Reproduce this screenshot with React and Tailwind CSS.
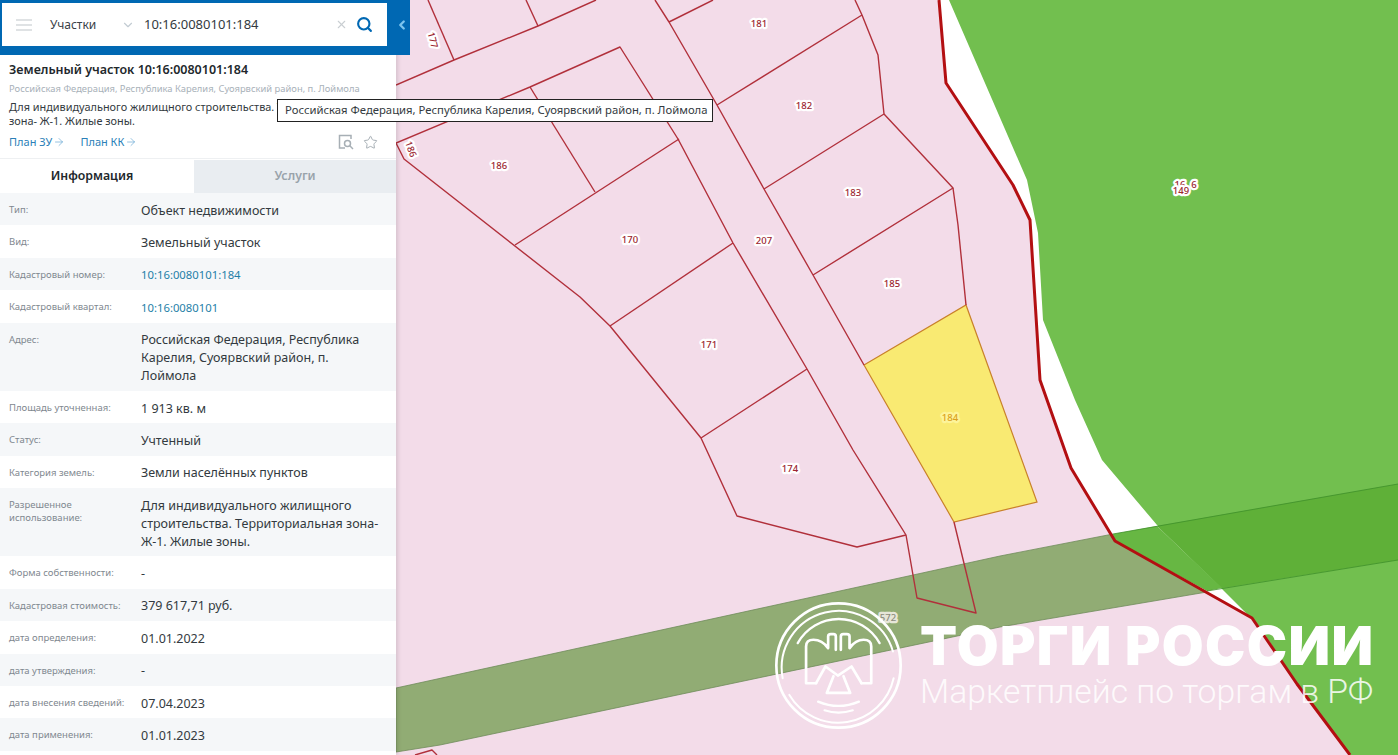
import { ArrowRight, ChevronDown, ChevronLeft, Search, Star, X } from 'lucide-react';

const rows = [
  ['Тип:', 'Объект недвижимости'],
  ['Вид:', 'Земельный участок'],
  ['Кадастровый номер:', '10:16:0080101:184', true],
  ['Кадастровый квартал:', '10:16:0080101', true],
  ['Адрес:', 'Российская Федерация, Республика Карелия, Суоярвский район, п. Лоймола'],
  ['Площадь уточненная:', '1 913 кв. м'],
  ['Статус:', 'Учтенный'],
  ['Категория земель:', 'Земли населённых пунктов'],
  ['Разрешенное использование:', 'Для индивидуального жилищного строительства. Территориальная зона- Ж-1. Жилые зоны.'],
  ['Форма собственности:', '-'],
  ['Кадастровая стоимость:', '379 617,71 руб.'],
  ['дата определения:', '01.01.2022'],
  ['дата утверждения:', '-'],
  ['дата внесения сведений:', '07.04.2023'],
  ['дата применения:', '01.01.2023'],
];

const thinLines = [
  '396,85 454,60 538,26 596,0',
  '428,0 454,60',
  '526,0 538,26',
  '396,143 530,87 620,47 678,139 733,243 807,369 853,450 906,535 917,598 976,613 954,522',
  '530,87 595,192',
  '515,245 679,139',
  '610,326 733,243',
  '701,438 807,369',
  '396,143 404,159 580,297 610,326 701,438 737,516 857,547 906,535',
  '655,0 669,22 717,105 764,189 813,275 864,365',
  '669,22 713,0',
  '717,105 862,15',
  '855,0 862,15 878,55 884,114 764,189',
  '884,114 953,188 813,275',
  '953,188 958,225 966,305',
  '415,755 432,750 437,755',
];

const labels = [
  ['181', 759, 23],
  ['182', 804, 105],
  ['183', 853, 192],
  ['185', 892, 283],
  ['207', 764, 240],
  ['186', 499, 165],
  ['170', 630, 239],
  ['171', 709, 344],
  ['174', 790, 468],
  ['16', 1180, 184],
  ['6', 1194, 184],
  ['149', 1181, 190],
];

function MapLabel({ x, y, rotate, fill = '#9c2630', halo = '#ffffff', children }) {
  return (
    <text
      x={x}
      y={y}
      textAnchor="middle"
      dominantBaseline="central"
      fontSize="9.5"
      fontWeight="500"
      fontFamily="'Noto Sans', sans-serif"
      fill={fill}
      stroke={halo}
      strokeWidth="4.5"
      strokeLinejoin="round"
      paintOrder="stroke"
      transform={rotate ? `rotate(${rotate} ${x} ${y})` : undefined}
    >
      {children}
    </text>
  );
}

function CadastreMap() {
  return (
    <svg className="block h-[755px] w-[1002px]" viewBox="396 0 1002 755">
      <rect x="396" y="0" width="1002" height="755" fill="#ffffff" />
      <polygon
        fill="#f3dce9"
        points="396,0 939,0 946,83 1013,185 1030,220 1035,300 1040,380 1071,468 1115,541 1252,618 1297,684 1350,755 396,755"
      />
      <polygon
        fill="#72bf4f"
        points="949,0 1027,180 1038,233 1043,320 1075,400 1102,460 1157,525 1222,589 1260,627 1297,684 1350,755 1398,755 1398,0"
      />
      <polygon fill="#91ac74" stroke="#6f8c5a" strokeWidth="0.8" points="396,688 1000,556 1113,534 1115,541 1207,592 1000,627 440,745 396,752" />
      <polygon fill="#67b743" points="1113,534 1157,526 1222,588 1207,591 1115,541" />
      <polygon fill="#5fb038" points="1157,526 1398,484 1398,560 1222,588" />
      <polyline fill="none" stroke="#3f8f2b" strokeWidth="0.8" points="1113,534 1398,484" />
      <polyline fill="none" stroke="#3f8f2b" strokeWidth="0.8" points="1207,591 1398,560" />
      <polygon fill="#f9ea72" stroke="#c9812a" strokeWidth="1.2" points="864,365 966,305 1037,502 954,522" />
      {thinLines.map((points) => (
        <polyline key={points} fill="none" stroke="#b1303b" strokeWidth="1.4" strokeLinejoin="round" points={points} />
      ))}
      <polyline
        fill="none"
        stroke="#b30f12"
        strokeWidth="3"
        strokeLinejoin="round"
        points="939,0 946,83 1013,185 1030,220 1035,300 1040,380 1071,468 1115,541 1252,618 1297,684 1350,755"
      />
      {labels.map(([text, x, y]) => (
        <MapLabel key={text + x} x={x} y={y}>
          {text}
        </MapLabel>
      ))}
      <MapLabel x={433} y={40} rotate={75}>177</MapLabel>
      <MapLabel x={411} y={149} rotate={70}>186</MapLabel>
      <MapLabel x={950} y={417} fill="#dba11c" halo="#fdf49a">184</MapLabel>
      <MapLabel x={888} y={617} fill="#8d8d7c" halo="#e6e6d8">572</MapLabel>
    </svg>
  );
}

function LogoMark() {
  return (
    <svg className="h-[127px] w-[127px] shrink-0" viewBox="17 22 380 380" fill="none" stroke="#ffffff" strokeLinecap="round" strokeLinejoin="round">
      <circle cx="207" cy="212" r="186" strokeWidth="8" />
      <path d="M40 250 A170 170 0 0 1 370 170" strokeWidth="6" />
      <path d="M372 250 A170 170 0 0 1 60 300" strokeWidth="6" />
      <path d="M85 145 A140 140 0 0 1 330 145" strokeWidth="7" />
      <path d="M140 265 H110 V155 Q110 135 132 135 Q158 135 176 160 V125 Q176 118 184 118 H192 Q199 118 199 125 V165 M214 165 V125 Q214 118 221 118 H232 Q240 118 240 125 V160 Q258 135 282 135 Q305 135 305 155 V265 H276" strokeWidth="8" />
      <path d="M140 265 L168 215 L205 242 L246 215 L276 265" strokeWidth="8" />
      <path d="M192 244 L172 294 H242 L222 244" strokeWidth="8" />
      <path d="M146 320 Q207 346 268 320" strokeWidth="7" />
      <path d="M165 346 Q207 360 250 346" strokeWidth="6" />
    </svg>
  );
}

function Row({ label, value, link }) {
  return (
    <div className="flex bg-white odd:bg-[#f5f7f9]">
      <div className="w-[141px] shrink-0 pl-[9px] pr-2 pt-[10px] text-[9.5px] leading-[13px] text-[#7f8890]">{label}</div>
      <div className={`w-[240px] pb-[5.7px] pt-[8.7px] leading-[18px] ${link ? 'text-[11.3px] text-[#1f7fa8]' : 'text-[12.5px] text-[#333a40]'}`}>{value}</div>
    </div>
  );
}

export default function App() {
  return (
    <div className="relative flex h-[755px] w-full overflow-hidden bg-white font-['Noto_Sans',sans-serif]">
      <aside className="relative z-10 w-[396px] shrink-0 bg-white shadow-[2px_0_4px_rgba(0,0,0,0.12)]">
        <header className="flex h-[55px] w-[410px] items-start bg-[#0068b3] pl-[2px] pt-[3px]">
          <div className="flex h-[43px] w-[385px] items-center bg-white">
            <div className="ml-[14px] flex w-[16px] flex-col gap-[3px]">
              <span className="h-[2px] bg-[#dfe2e4]" />
              <span className="h-[2px] bg-[#dfe2e4]" />
              <span className="h-[2px] bg-[#dfe2e4]" />
            </div>
            <span className="ml-[18px] w-[71px] text-[12px] text-[#3b4248]">Участки</span>
            <ChevronDown className="h-[14px] w-[14px] text-[#c3ccd3]" />
            <span className="ml-[9px] flex-1 text-[13px] text-[#333a40]">10:16:0080101:184</span>
            <X className="h-[13px] w-[13px] text-[#c9ced2]" />
            <Search className="ml-[8px] mr-[14px] h-[17px] w-[17px] text-[#0068b3]" strokeWidth={3} />
          </div>
          <ChevronLeft className="ml-[8px] mt-[15px] h-[14px] w-[14px] text-[#7cc4ee]" strokeWidth={4} />
        </header>

        <div className="px-[9px] pt-[6px]">
          <h1 className="text-[12.5px] font-semibold leading-[17px] text-[#22282c]">Земельный участок 10:16:0080101:184</h1>
          <p className="mt-[4px] whitespace-nowrap text-[9.4px] leading-[13px] text-[#a8b1b9]">
            Российская Федерация, Республика Карелия, Суоярвский район, п. Лоймола
          </p>
          <p className="mt-[5px] text-[10.9px] leading-[14px] text-[#333a40]">
            Для индивидуального жилищного строительства. Территориальная зона- Ж-1. Жилые зоны.
          </p>
          <div className="mt-[6px] flex h-[16px] items-center text-[11px] text-[#2b7fb8]">
            <span>План ЗУ</span>
            <ArrowRight className="ml-[1px] h-[12px] w-[12px] text-[#5fa3d0]" strokeWidth={1.3} />
            <span className="ml-[15px]">План КК</span>
            <ArrowRight className="ml-[1px] h-[12px] w-[12px] text-[#5fa3d0]" strokeWidth={1.3} />
            <svg className="ml-auto h-[16px] w-[16px]" viewBox="0 0 16 16" fill="none" stroke="#a7afb5" strokeWidth="1.5">
              <path d="M7 14 H1.5 V1.5 H13 V5" />
              <circle cx="9.5" cy="9.5" r="3" />
              <path d="M11.8 11.8 L15 15" />
            </svg>
            <Star className="ml-[9px] mr-[9px] h-[15px] w-[15px] text-[#a7afb5]" strokeWidth={1.6} />
          </div>
        </div>

        <div className="mt-[8px] flex h-[35px] border-t border-[#eef0f2] pt-[1px] text-[12.3px] font-semibold">
          <div className="flex w-[194px] items-center justify-center pr-[10px] text-[#22282c]">Информация</div>
          <div className="flex flex-1 items-center justify-center bg-[#e9edf1] text-[#99a3ab]">Услуги</div>
        </div>

        <div>
          {rows.map(([label, value, link]) => (
            <Row key={label} label={label} value={value} link={link} />
          ))}
        </div>
      </aside>

      <main className="relative flex-1 overflow-hidden">
        <CadastreMap />
        <div className="absolute left-[379px] top-[602px] flex items-center gap-[18px] text-white">
          <LogoMark />
          <div className="w-[456px]">
            <div className="whitespace-nowrap font-['Inter',sans-serif] text-[54px] font-black leading-[52px] tracking-[1.4px]">ТОРГИ РОССИИ</div>
            <div className="whitespace-nowrap font-['Roboto',sans-serif] text-[33.7px] font-light leading-[40px] opacity-85">Маркетплейс по торгам в РФ</div>
          </div>
        </div>
      </main>

      <div className="absolute left-[277px] top-[99px] z-20 flex h-[23px] items-center whitespace-nowrap border border-[#222222] bg-white pl-[7px] pr-[4px] text-[11.3px] text-[#333a40]">
        Российская Федерация, Республика Карелия, Суоярвский район, п. Лоймола
      </div>
    </div>
  );
}
